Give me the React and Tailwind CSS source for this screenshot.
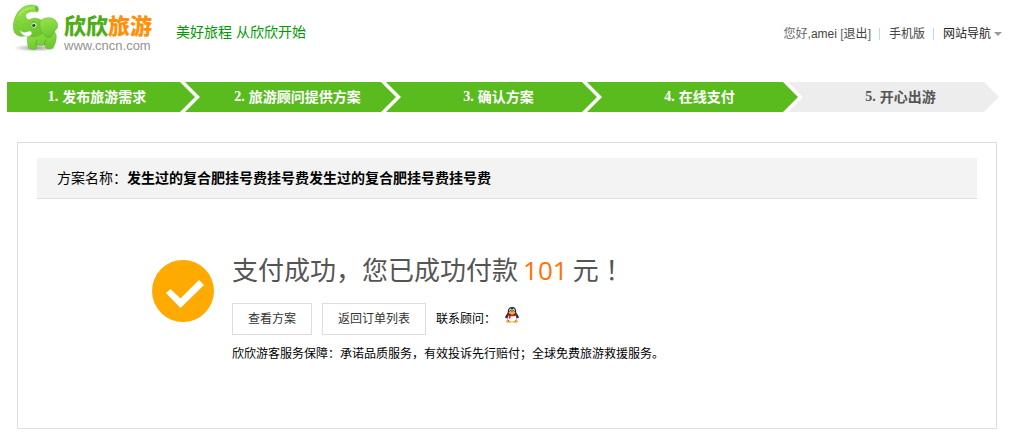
import React from "react";

function ElephantLogo() {
  return (
    <svg className="h-[56px] w-[54px] shrink-0" viewBox="0 0 162 168" aria-hidden="true">
      <defs>
        <linearGradient id="skin" x1="0" y1="0" x2="0.3" y2="1">
          <stop offset="0" stopColor="#9fe04f" />
          <stop offset="0.5" stopColor="#84d83c" />
          <stop offset="1" stopColor="#6cc731" />
        </linearGradient>
        <radialGradient id="shade">
          <stop offset="0" stopColor="#666" stopOpacity="0.65" />
          <stop offset="1" stopColor="#666" stopOpacity="0" />
        </radialGradient>
      </defs>
      <ellipse cx="84" cy="144" rx="68" ry="11" fill="url(#shade)" />
      <path d="M62 100 C56 112 57 130 62 145 Q72 151 84 147 L88 135 Q100 139 110 134 L114 145 Q124 149 134 145 Q146 128 145 108 Q142 92 128 84 Z" fill="url(#skin)" stroke="#62b232" strokeWidth="1.5" />
      <path d="M84 137 Q82 126 88 119 M110 135 Q108 126 114 119" fill="none" stroke="#4f9f25" strokeWidth="2" />
      <path d="M84 17 C64 12 42 18 29 38 C18 54 13 76 18 93 C23 109 42 112 58 106 C72 112 92 112 104 100 L104 66 C96 54 78 51 63 60 C52 56 50 46 57 40 C65 34 76 34 86 36 C94 35 93 20 84 17 Z" fill="url(#skin)" stroke="#62b232" strokeWidth="1.5" />
      <ellipse cx="86" cy="26" rx="4" ry="8" fill="#6db736" transform="rotate(-12 86 26)" />
      <path d="M98 62 C108 52 130 50 141 60 C151 69 151 82 144 89 C136 94 137 105 128 111 C116 116 104 104 99 92 C95 80 93 70 98 62 Z" fill="url(#skin)" stroke="#58a82c" strokeWidth="1.5" />
      <path d="M35 91 C43 98 54 98 65 93 C73 94 74 103 66 107 C52 112 38 104 35 91 Z" fill="#fff" stroke="#93a58a" strokeWidth="1" />
      <circle cx="78" cy="76" r="7" fill="#eaf6df" />
      <circle cx="77" cy="76" r="5" fill="#23401a" />
      <circle cx="75" cy="74" r="1.5" fill="#fff" />
      <path d="M70 67 Q77 63 84 67" fill="none" stroke="#4f9f25" strokeWidth="1.5" />
      <path d="M34 46 C43 30 60 23 76 24" fill="none" stroke="#c6ef80" strokeWidth="4" strokeLinecap="round" opacity="0.6" />
      <path d="M21 74 l9 3 M21 84 l10 2 M24 63 l9 4" stroke="#69b934" strokeWidth="1.5" />
    </svg>
  );
}

function Penguin() {
  return (
    <svg className="h-4 w-4" viewBox="0 0 16 16" aria-hidden="true">
      <ellipse cx="5" cy="14.5" rx="3" ry="1.3" fill="#f9a51a" />
      <ellipse cx="11" cy="14.5" rx="3" ry="1.3" fill="#f9a51a" />
      <path d="M8 0 C4.6 0 3.6 2.5 3.8 5.5 L1 10 L2 11.5 L3.2 10.5 L4 14 H12 L12.8 10.5 L14 11.5 L15 10 L12.2 5.5 C12.4 2.5 11.4 0 8 0 Z" fill="#252a30" />
      <ellipse cx="8" cy="11" rx="4.4" ry="3.6" fill="#fff" />
      <ellipse cx="6.5" cy="3.2" rx="1.2" ry="1.6" fill="#fff" />
      <ellipse cx="9.5" cy="3.2" rx="1.2" ry="1.6" fill="#fff" />
      <circle cx="6.8" cy="3.4" r="0.6" fill="#111" />
      <circle cx="9.2" cy="3.4" r="0.6" fill="#111" />
      <ellipse cx="8" cy="5.8" rx="3.4" ry="1.3" fill="#fbb01c" />
      <path d="M3.4 7 Q8 9 12.6 7 L12.6 8.4 Q9 9.6 6.6 9.2 L6.4 11.6 H4.6 L5 9 L3.2 8.4 Z" fill="#e3171b" />
    </svg>
  );
}

const steps = ["发布旅游需求", "旅游顾问提供方案", "确认方案", "在线支付", "开心出游"];

const first = "-mr-[10px] bg-[#5abb1f] pr-2 text-white [clip-path:polygon(0_0,calc(100%_-_15px)_0,100%_50%,calc(100%_-_15px)_100%,0_100%)]";
const middle = "-mr-[10px] bg-[#5abb1f] pl-[14px] text-white [clip-path:polygon(0_0,calc(100%_-_15px)_0,100%_50%,calc(100%_-_15px)_100%,0_100%,15px_50%)]";
const last = "bg-[#ededed] pl-[14px] text-[#555] [clip-path:polygon(0_0,calc(100%_-_15px)_0,100%_50%,calc(100%_-_15px)_100%,0_100%,15px_50%)]";

function stepClass(i) {
  if (i === 0) return first;
  return i === steps.length - 1 ? last : middle;
}

export default function App() {
  return (
    <div className="bg-white pb-[14px] font-['Liberation_Sans','Noto_Sans_CJK_SC',sans-serif] text-xs text-black">
      <header className="flex h-[82px] items-start justify-between pl-2 pr-[11px]">
        <div className="flex">
          <a href="#" className="flex" aria-label="欣欣旅游">
            <ElephantLogo />
            <span className="flex flex-col pl-[2px] pt-2">
              <span className="font-['Noto_Sans_CJK_SC',sans-serif] text-[22px] font-black leading-8 text-[#4fae17]">
                欣欣<span className="text-[#ff9108]">旅游</span>
              </span>
              <span className="text-[13px] leading-3 text-[#929292]">www.cncn.com</span>
            </span>
          </a>
          <p className="pl-6 pt-[22px] text-sm leading-5 text-[#090]">美好旅程 从欣欣开始</p>
        </div>
        <nav className="flex items-center pt-[26px] leading-4 text-[#444]">
          <span className="text-[#666]">
            您好,<a href="#" className="text-[#444]">amei</a> [<a href="#" className="text-[#444]">退出</a>]
          </span>
          <span className="ml-2 h-3 w-px bg-[#b5dfe5]" />
          <a href="#" className="ml-[9px] mr-2">手机版</a>
          <span className="h-3 w-px bg-[#b5dfe5]" />
          <button type="button" className="ml-[9px] flex items-center gap-[3px] text-[#222]">
            网站导航
            <svg className="h-1 w-2" viewBox="0 0 8 4" aria-hidden="true"><path d="M0 0H8L4 4Z" fill="#999" /></svg>
          </button>
        </nav>
      </header>

      <ol className="ml-[7px] mr-[14px] grid grid-cols-[178fr_201fr_201fr_201fr_211fr]">
        {steps.map((label, i) => (
          <li key={label} className={`flex h-[30px] items-center justify-center gap-1 text-sm font-bold ${stepClass(i)}`}>
            <span className="font-['Liberation_Serif',serif]">{i + 1}.</span>
            <span>{label}</span>
          </li>
        ))}
      </ol>

      <main className="ml-[17px] mr-4 mt-[30px] border border-[#ddd] px-[19px] pb-[66px] pt-[15px]">
        <h1 className="border-b border-[#ddd] bg-[#f3f3f3] px-5 py-[10px] text-sm leading-5">
          方案名称：<strong>发生过的复合肥挂号费挂号费发生过的复合肥挂号费挂号费</strong>
        </h1>
        <section className="flex items-start pl-[115px] pt-[50px]">
          <svg className="mt-[11px] h-[62px] w-[62px] shrink-0" viewBox="0 0 62 62" aria-hidden="true">
            <circle cx="31" cy="31" r="31" fill="#fa0" />
            <path d="M14 33 L18.5 29 L28.5 38.5 L47 20 L52 25 L28.5 48 Z" fill="#fff" />
          </svg>
          <div className="pl-[18px]">
            <h2 className="font-['Noto_Sans_CJK_SC',sans-serif] text-[26px] font-normal leading-10 text-[#555]">
              支付成功，您已成功付款<span className="mx-[5px] font-['Open_Sans',sans-serif] text-[#ff7200]">101</span>元<span className="font-['Noto_Sans_CJK_JP',sans-serif]">！</span>
            </h2>
            <div className="flex items-center pt-[13px]">
              <button type="button" className="h-8 border border-[#ddd] px-[15px] text-[#333]">查看方案</button>
              <button type="button" className="ml-[10px] h-8 border border-[#ddd] px-[15px] text-[#333]">返回订单列表</button>
              <span className="pl-[10px]">联系顾问：</span>
              <a href="#" className="mb-2 ml-2" aria-label="QQ"><Penguin /></a>
            </div>
            <p className="pt-[11px] leading-4">欣欣游客服务保障：承诺品质服务，有效投诉先行赔付；全球免费旅游救援服务。</p>
          </div>
        </section>
      </main>
    </div>
  );
}
